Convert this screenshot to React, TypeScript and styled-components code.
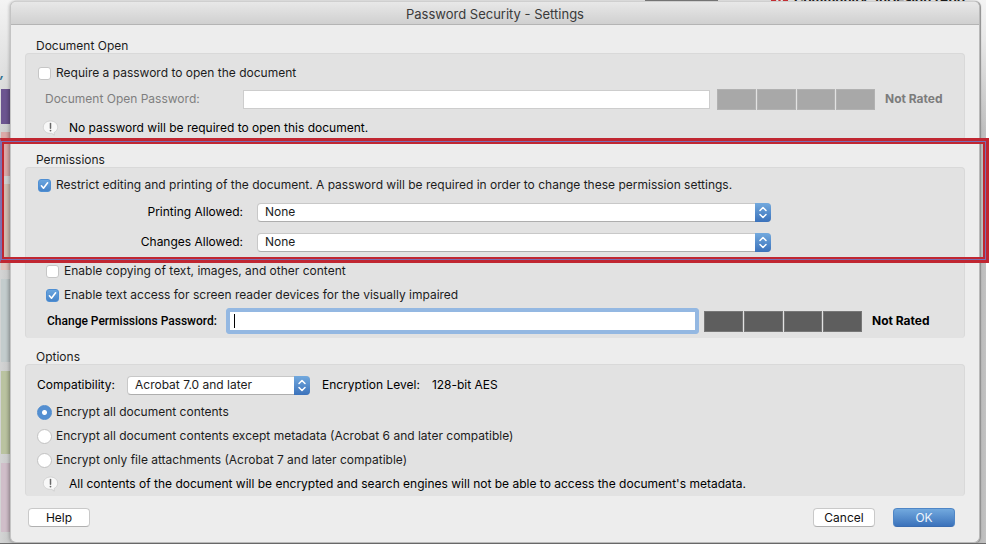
import React from "react";
import styled, { createGlobalStyle, css } from "styled-components";

const GlobalStyle = createGlobalStyle`
  *, *::before, *::after { box-sizing: border-box; }
  body { margin: 0; background: #fff; }
  #root { font: 12px/16px Inter, "Liberation Sans", sans-serif; color: #1c1c1c; }
  button, input, select { font: inherit; color: inherit; margin: 0; }
`;

const Desktop = styled.div`
  position: relative;
  overflow-x: clip;
  padding: 1px 10px 1px;
`;

const Backdrop = styled.div`
  position: absolute;
  inset: 0 4px 0 0;
  overflow: hidden;
  background: linear-gradient(90deg, #d4d5d5 0, #c6c7c7 10px, #b8b8b8 calc(100% - 7px), #c2c2c2 100%);
  &::before {
    content: "";
    position: absolute;
    inset: 0 0 auto 0;
    height: 130px;
    background: linear-gradient(#f4f4f4, #e8e8e8 30%, rgba(220, 220, 220, 0));
  }
  &::after {
    content: "";
    position: absolute;
    inset: auto 0 0 0;
    height: 1px;
    background: #6c6c6c;
  }
`;

const Tile = styled.div<{ $top: number; $height: number; $color: string }>`
  position: absolute;
  left: 1px;
  width: 10px;
  top: ${(p) => p.$top}px;
  height: ${(p) => p.$height}px;
  background: linear-gradient(90deg, rgba(0, 0, 0, 0) 40%, rgba(0, 0, 0, 0.14)), ${(p) => p.$color};
`;

const Comma = styled.span`
  position: absolute;
  left: 0;
  top: 64px;
  font-size: 14px;
  font-style: italic;
  font-weight: 600;
  color: #2c6f8e;
`;

const TabStrip = styled.div`
  position: absolute;
  left: 645px;
  top: 0;
  width: 73px;
  height: 2px;
  background: #7b7b7b;
`;

const TabLabel = styled.div`
  position: absolute;
  left: 771px;
  top: -8px;
  display: flex;
  align-items: center;
  gap: 6px;
  font-size: 13px;
  line-height: 14px;
  font-weight: 700;
  white-space: nowrap;
  color: #111;
`;

const Window = styled.main`
  position: relative;
  border: 1px solid #b9b9b9;
  border-left-color: #c4c4c4;
  border-top-color: #cfcfcf;
  border-radius: 6px;
  background: #ededed;
  box-shadow: 1px 0 1px #8d8d8d, -1px 0 3px rgba(0, 0, 0, 0.2);
`;

const TitleBar = styled.header`
  display: flex;
  align-items: center;
  justify-content: center;
  height: 23px;
  padding-top: 2px;
  border-bottom: 1px solid #b4b4b4;
  border-radius: 5px 5px 0 0;
  background: linear-gradient(#e8e8e8, #d0d0d0);
`;

const Title = styled.h1`
  margin: 0;
  font-size: 13px;
  line-height: 16px;
  font-weight: 400;
  color: #3a3a3a;
`;

const Body = styled.form`
  padding: 12px 14px 15px;
`;

const Section = styled.section<{ $space?: number }>`
  position: relative;
  margin-top: ${(p) => p.$space ?? 0}px;
`;

const Heading = styled.h2`
  margin: 0;
  padding: 2px 0 0 11px;
  font-size: 12px;
  line-height: 14px;
  font-weight: 400;
`;

const Panel = styled.div<{ $start: number; $end?: number }>`
  border: 1px solid #d9d9d9;
  border-bottom-width: 0;
  border-radius: 4px;
  background: #e2e2e2;
  padding-top: ${(p) => p.$start}px;
  padding-bottom: ${(p) => p.$end ?? 0}px;
`;

const Row = styled.div<{ $space?: number; $indent: number }>`
  display: flex;
  align-items: center;
  height: 24px;
  margin-top: ${(p) => p.$space ?? 0}px;
  padding-left: ${(p) => p.$indent}px;
  white-space: nowrap;
`;

const Choice = styled.label<{ $gap: number }>`
  display: flex;
  align-items: center;
  gap: ${(p) => p.$gap}px;
`;

const CheckBox = styled.span`
  position: relative;
  display: flex;
  width: 13px;
  height: 13px;
  svg { position: absolute; inset: 0; pointer-events: none; }
  input {
    appearance: none;
    width: 13px;
    height: 13px;
    border: 1px solid #c6c6c6;
    border-radius: 3px;
    background: #fff;
  }
  input:checked { border-color: #4f8fd3; background: linear-gradient(#6aa5de, #4684c9); }
  input:not(:checked) + svg { display: none; }
`;

const Radio = styled.input`
  appearance: none;
  width: 15px;
  height: 15px;
  border: 1px solid #c2c2c2;
  border-radius: 50%;
  background: #fff;
  &:checked {
    border-color: #4d8bce;
    background: radial-gradient(circle, #fff 0 2px, #548fd1 3px);
  }
`;

const FieldLabel = styled.label<{ $width: number; $end?: boolean; $muted?: boolean }>`
  flex: none;
  width: ${(p) => p.$width}px;
  padding-right: ${(p) => (p.$end ? 14 : 0)}px;
  text-align: ${(p) => (p.$end ? "right" : "left")};
  color: ${(p) => (p.$muted ? "#7f7f7f" : "#000")};
`;

const CompactLabel = styled(FieldLabel)`
  font-family: Roboto, Inter, sans-serif;
  font-weight: 500;
`;

const TextBox = styled.input`
  flex: 1;
  min-width: 0;
  height: 19px;
  padding: 0 4px;
  border: 1px solid #cdcdcd;
  background: #fff;
`;

const FocusedField = styled.span`
  position: relative;
  display: flex;
  flex: 1;
  min-width: 0;
  padding: 3px;
  border: 1px solid #94b8e2;
  border-radius: 3px;
  background: #94b8e2;
  input { height: 18px; border: 0; outline: none; caret-color: transparent; }
  &::after {
    content: "";
    position: absolute;
    left: 7px;
    top: 5px;
    width: 1px;
    height: 14px;
    background: #000;
  }
`;

const Meter = styled.div<{ $start: number; $dark?: boolean }>`
  display: grid;
  flex: none;
  grid-template-columns: repeat(4, 1fr);
  gap: 1px;
  width: 158px;
  height: 21px;
  margin-left: ${(p) => p.$start}px;
  span {
    border: 1px solid ${(p) => (p.$dark ? "#777" : "#b1b1b1")};
    background: ${(p) => (p.$dark ? "#5e5e5e" : "#a8a8a8")};
  }
`;

const Rating = styled.strong<{ $width: number; $muted?: boolean }>`
  flex: none;
  width: ${(p) => p.$width}px;
  padding-left: 10px;
  font-size: 12px;
  font-weight: 700;
  color: ${(p) => (p.$muted ? "#7c7c7c" : "#000")};
`;

const SelectBox = styled.span<{ $width?: number; $end?: number }>`
  position: relative;
  display: flex;
  ${(p) => (p.$width ? css`flex: none; width: ${p.$width}px;` : css`flex: 1;`)}
  margin-right: ${(p) => p.$end ?? 0}px;
  select {
    appearance: none;
    width: 100%;
    height: 19px;
    padding: 0 20px 1px 7px;
    line-height: 16px;
    border: 1px solid #c8c8c8;
    border-bottom-color: #aeaeae;
    border-radius: 4px;
    background: #fff;
  }
  svg {
    position: absolute;
    right: 0;
    top: 0;
    pointer-events: none;
    border-radius: 0 4px 4px 0;
    background: linear-gradient(#72a9de, #3b72bb);
  }
`;

const Note = styled.p`
  display: flex;
  align-items: center;
  gap: 10px;
  margin: 0;
  color: #000;
`;

const Fact = styled.span`
  margin-left: 12px;
  color: #000;
`;

const Highlight = styled.div`
  position: absolute;
  left: -25px;
  right: -24px;
  top: -13px;
  height: 125px;
  pointer-events: none;
  border: 3px solid #c02631;
  border-left: 1px solid #8271ab;
  &::before {
    content: "";
    position: absolute;
    inset: 0;
    border: 1px solid #7970b4;
  }
  &::after {
    content: "";
    position: absolute;
    inset: 1px;
    border: 2px solid #c02631;
  }
`;

const Footer = styled.footer`
  display: flex;
  align-items: center;
  gap: 18px;
  margin: 12px 10px 0 3px;
`;

const PushButton = styled.button<{ $primary?: boolean }>`
  width: 62px;
  height: 19px;
  padding: 0;
  border: 1px solid ${(p) => (p.$primary ? "#4f86c6" : "#c9c9c9")};
  border-bottom-color: ${(p) => (p.$primary ? "#3a6cb0" : "#b0b0b0")};
  border-radius: 4px;
  line-height: 16px;
  color: ${(p) => (p.$primary ? "#eef5fd" : "#111")};
  background: ${(p) => (p.$primary ? "linear-gradient(#72a9de, #3b72bb)" : "#fff")};
  &:first-child { margin-right: auto; }
`;

const tiles = [
  { top: 89, height: 35, color: "#6c5590" },
  { top: 132, height: 44, color: "#dba9a8" },
  { top: 184, height: 74, color: "#d2bdb1" },
  { top: 260, height: 10, color: "#e0c4bd" },
  { top: 279, height: 83, color: "#c3cccd" },
  { top: 371, height: 83, color: "#bac3a0" },
  { top: 463, height: 69, color: "#d0bec9" },
];

function Check({ label, checked }: { label: string; checked?: boolean }) {
  return (
    <Choice $gap={5}>
      <CheckBox>
        <input type="checkbox" defaultChecked={checked} />
        <svg width="13" height="13" viewBox="0 0 13 13" fill="none" stroke="#fff" strokeWidth="1.6" strokeLinecap="round" strokeLinejoin="round">
          <path d="M3.4 6.8 5.5 9.2 9.6 3.8" />
        </svg>
      </CheckBox>
      {label}
    </Choice>
  );
}

function RadioChoice({ label, checked }: { label: string; checked?: boolean }) {
  return (
    <Choice $gap={4}>
      <Radio type="radio" name="encrypt" defaultChecked={checked} />
      {label}
    </Choice>
  );
}

function Picker({ id, value, width, end }: { id: string; value: string; width?: number; end?: number }) {
  return (
    <SelectBox $width={width} $end={end}>
      <select id={id} defaultValue={value}>
        <option>{value}</option>
      </select>
      <svg width="16" height="19" viewBox="0 0 16 19" fill="none" stroke="#fff" strokeWidth="1.5" strokeLinecap="round" strokeLinejoin="round">
        <path d="M5 7.5 8 4.5 11 7.5M5 11.5 8 14.5 11 11.5" />
      </svg>
    </SelectBox>
  );
}

function InfoBubble() {
  return (
    <svg width="17" height="16" viewBox="0 0 17 16" aria-hidden="true">
      <path d="M8.5 1C4.400 1 1.300 3.700 1.300 7.200s3.100 6.200 7.200 6.200l1.200-.1 2.600 1.900-.2-2.700c2.200-1.100 3.600-3 3.600-5.300C15.700 3.700 12.600 1 8.500 1Z" fill="#f8f8f8" stroke="#cbcbcb" strokeWidth=".8" />
      <path d="M8.5 3.500v4.700" stroke="#686868" strokeWidth="1.5" strokeLinecap="round" />
      <circle cx="8.5" cy="10.6" r=".9" fill="#686868" />
    </svg>
  );
}

function StrengthMeter({ start, dark }: { start: number; dark?: boolean }) {
  return (
    <Meter $start={start} $dark={dark}>
      <span />
      <span />
      <span />
      <span />
    </Meter>
  );
}

export default function App() {
  return (
    <Desktop>
      <GlobalStyle />
      <Backdrop>
        {tiles.map((t) => (
          <Tile key={t.top} $top={t.top} $height={t.height} $color={t.color} />
        ))}
        <Comma>,</Comma>
        <TabStrip />
        <TabLabel>
          <svg width="17" height="14" viewBox="0 0 17 14">
            <rect width="17" height="14" rx="2" fill="#d8262c" />
            <path d="M4 13 8.5 4 13 13" fill="none" stroke="#fff" strokeWidth="2" />
          </svg>
          Community: InDesign (Ado
        </TabLabel>
      </Backdrop>
      <Window>
        <TitleBar>
          <Title>Password Security - Settings</Title>
        </TitleBar>
        <Body onSubmit={(e) => e.preventDefault()}>
          <Section>
            <Heading>Document Open</Heading>
            <Panel $start={7}>
              <Row $indent={12}>
                <Check label="Require a password to open the document" />
              </Row>
              <Row $space={2} $indent={19}>
                <FieldLabel htmlFor="open-password" $width={198} $muted>Document Open Password:</FieldLabel>
                <TextBox id="open-password" type="password" disabled />
                <StrengthMeter start={7} />
                <Rating $width={89} $muted>Not Rated</Rating>
              </Row>
              <Row $space={5} $indent={16}>
                <Note><InfoBubble />No password will be required to open this document.</Note>
              </Row>
            </Panel>
          </Section>

          <Section $space={11}>
            <Heading>Permissions</Heading>
            <Panel $start={5} $end={5}>
              <Row $indent={12}>
                <Check checked label="Restrict editing and printing of the document. A password will be required in order to change these permission settings." />
              </Row>
              <Row $space={3} $indent={0}>
                <FieldLabel htmlFor="printing" $width={231} $end>Printing Allowed:</FieldLabel>
                <Picker id="printing" value="None" end={193} />
              </Row>
              <Row $space={6} $indent={0}>
                <FieldLabel htmlFor="changes" $width={231} $end>Changes Allowed:</FieldLabel>
                <Picker id="changes" value="None" end={193} />
              </Row>
              <Row $space={5} $indent={20}>
                <Check label="Enable copying of text, images, and other content" />
              </Row>
              <Row $indent={20}>
                <Check checked label="Enable text access for screen reader devices for the visually impaired" />
              </Row>
              <Row $space={2} $indent={21}>
                <CompactLabel htmlFor="permissions-password" $width={179}>Change Permissions Password:</CompactLabel>
                <FocusedField>
                  <TextBox id="permissions-password" type="password" />
                </FocusedField>
                <StrengthMeter start={5} dark />
                <Rating $width={102}>Not Rated</Rating>
              </Row>
            </Panel>
            <Highlight />
          </Section>

          <Section $space={10}>
            <Heading>Options</Heading>
            <Panel $start={8}>
              <Row $indent={11}>
                <FieldLabel htmlFor="compatibility" $width={90}>Compatibility:</FieldLabel>
                <Picker id="compatibility" value="Acrobat 7.0 and later" width={183} />
                <Fact>Encryption Level:</Fact>
                <Fact>128-bit AES</Fact>
              </Row>
              <Row $space={3} $indent={11}>
                <RadioChoice checked label="Encrypt all document contents" />
              </Row>
              <Row $indent={11}>
                <RadioChoice label="Encrypt all document contents except metadata (Acrobat 6 and later compatible)" />
              </Row>
              <Row $indent={11}>
                <RadioChoice label="Encrypt only file attachments (Acrobat 7 and later compatible)" />
              </Row>
              <Row $indent={16}>
                <Note><InfoBubble />All contents of the document will be encrypted and search engines will not be able to access the document's metadata.</Note>
              </Row>
            </Panel>
          </Section>

          <Footer>
            <PushButton type="button">Help</PushButton>
            <PushButton type="button">Cancel</PushButton>
            <PushButton type="submit" $primary>OK</PushButton>
          </Footer>
        </Body>
      </Window>
    </Desktop>
  );
}
